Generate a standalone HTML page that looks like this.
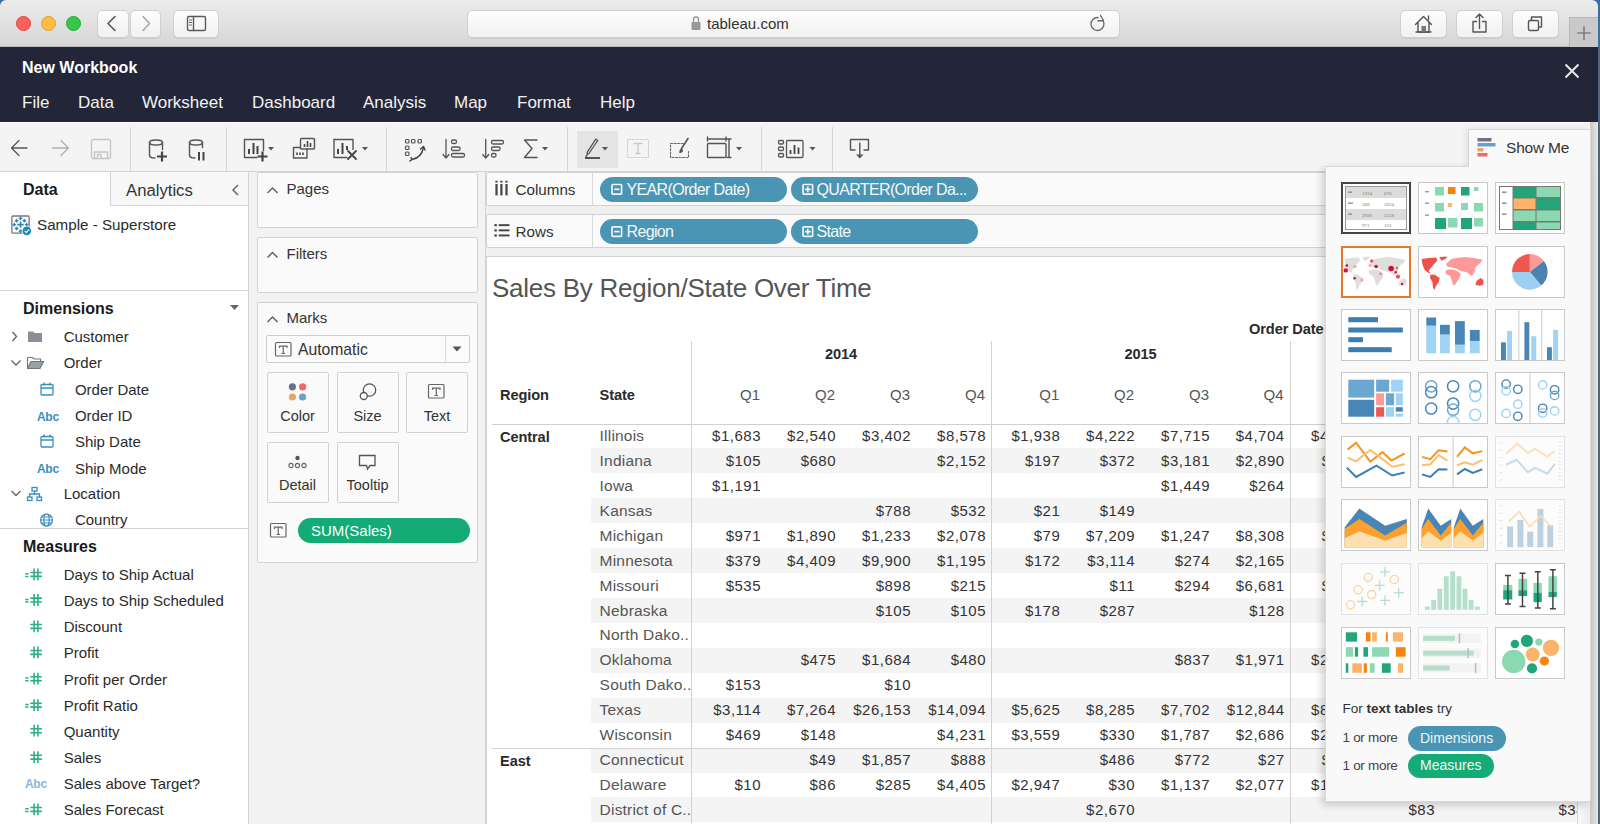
<!DOCTYPE html>
<html><head><meta charset="utf-8">
<style>
*{box-sizing:border-box;margin:0;padding:0}
html,body{width:1600px;height:824px;overflow:hidden;background:#3a6ea5}
body{position:relative;font-family:"Liberation Sans",sans-serif;color:#333}
.a{position:absolute}
.t{position:absolute;white-space:nowrap;line-height:1}
/* browser chrome */
#chrome{left:0;top:0;width:1598px;height:47px;background:linear-gradient(#ececec,#d6d6d6);border-top-left-radius:6px;border-top-right-radius:6px;border-bottom:1px solid #b8b8b8}
.light{width:15px;height:15px;border-radius:50%;top:16px}
.btn{background:linear-gradient(#fdfdfd,#f1f1f1);border:1px solid #cfcfcf;border-radius:5px;box-shadow:0 1px 0 rgba(0,0,0,.06)}
#hdr{left:0;top:47px;width:1598px;height:75px;background:#232638}
#hdr .m{color:#f2f2f2;font-size:17px;top:46.5px}
#tb{left:0;top:122px;width:1598px;height:50px;background:#f4f4f4;border-bottom:1px solid #d4d4d4;border-top:1px solid #fdfdfd}
.sep{width:1px;background:#d6d6d6;top:4px;height:44px}
#main{left:0;top:172px;width:1598px;height:652px;background:#f0f0f0}
.box{background:#fafafa;border:1px solid #d2d2d2;border-radius:2px}
.mk{width:62px;height:61px;border:1px solid #d2d2d2;background:#fafafa;border-radius:2px}
.mkt{width:62px;text-align:center;font-size:14.5px;color:#333}
.pill{border-radius:13px}
.bp{height:24.5px;background:#4a95b3;border-radius:12.5px}
.bpt{font-size:16px;color:#f4f8fa;letter-spacing:-0.65px}
.hd{font-size:14.6px;font-weight:bold;color:#2a2a2a;letter-spacing:-0.1px;margin-top:1.5px}
.qh{width:60px;text-align:right;font-size:15px;color:#555}
.st{font-size:15.5px;color:#555;letter-spacing:0.2px}
.nv{width:80px;text-align:right;font-size:15px;color:#333;letter-spacing:0.5px;margin-left:1px}
</style></head><body>
<div id="chrome" class="a">
  <div class="a light" style="left:16px;background:#fc605c;border:1px solid #e0443e"></div>
  <div class="a light" style="left:41px;background:#fdbc40;border:1px solid #dea034"></div>
  <div class="a light" style="left:66px;background:#34c84a;border:1px solid #27aa35"></div>
  <div class="a btn" style="left:97px;top:10px;width:32px;height:28px"></div>
  <div class="a btn" style="left:130px;top:10px;width:31px;height:28px"></div>
  <div class="a btn" style="left:173px;top:10px;width:46px;height:28px"></div>
  <div class="a btn" style="left:467px;top:10px;width:653px;height:28px"></div>
  <div class="t" style="left:707px;top:16px;font-size:15px;color:#333">tableau.com</div>
  <div class="a btn" style="left:1400px;top:10px;width:47px;height:28px"></div>
  <div class="a btn" style="left:1456px;top:10px;width:47px;height:28px"></div>
  <div class="a btn" style="left:1512px;top:10px;width:47px;height:28px"></div>
  <div class="a" style="left:1569px;top:17px;width:29px;height:30px;background:#c9c9c9;border-left:1px solid #b9b9b9;border-top:1px solid #b9b9b9"></div>
  <svg class="a" style="left:0;top:0" width="1598" height="47" fill="none" stroke-linecap="round" stroke-linejoin="round">
    <path d="M115 16.5l-7 7 7 7" stroke="#555" stroke-width="1.6"/>
    <path d="M143 16.5l6.5 7-6.5 7" stroke="#a8a8a8" stroke-width="1.6"/>
    <rect x="187.5" y="16.5" width="18" height="14" rx="1.5" stroke="#5a5a5a" stroke-width="1.4"/>
    <path d="M193.5 16.5v14" stroke="#5a5a5a" stroke-width="1.4"/>
    <path d="M189.5 20h2M189.5 22.5h2M189.5 25h2" stroke="#5a5a5a" stroke-width="1"/>
    <rect x="691.5" y="22" width="9" height="8" rx="1" fill="#9a9a9a"/>
    <path d="M693.5 22v-2.5a2.5 2.5 0 0 1 5 0V22" stroke="#9a9a9a" stroke-width="1.5"/>
    <path d="M1098 17.5a6.5 6.5 0 1 0 5 3" stroke="#666" stroke-width="1.3"/>
    <path d="M1100.5 15.5l3 5-5.5 .5" stroke="#666" stroke-width="1.3"/>
    <!-- home -->
    <path d="M1415.5 24.5l8-8 8 8M1418 22.5v9.5h11v-9.5M1428.5 19.5v-3.5" stroke="#555" stroke-width="1.4"/>
    <path d="M1416 32h15" stroke="#555" stroke-width="1.4"/>
    <rect x="1421.5" y="26" width="4.5" height="6" fill="#777"/>
    <!-- share -->
    <path d="M1476.5 21.5h-3.5v10.5h13v-10.5h-3.5M1479.5 28.5v-14.5M1476 17.5l3.5-3.5 3.5 3.5" stroke="#555" stroke-width="1.4"/>
    <!-- tabs -->
    <rect x="1528.5" y="20.5" width="10" height="10" rx="1.5" stroke="#555" stroke-width="1.4"/>
    <path d="M1531.5 20.5v-3.5h10v10h-3" stroke="#555" stroke-width="1.4"/>
    <path d="M1584 26.5v13M1577.5 33h13" stroke="#666" stroke-width="1.2"/>
  </svg>
</div>
<div id="hdr" class="a">
  <div class="t" style="left:22px;top:13px;font-size:16px;font-weight:bold;color:#fff">New Workbook</div>
  <div class="t m" style="left:22px">File</div>
  <div class="t m" style="left:78px">Data</div>
  <div class="t m" style="left:142px">Worksheet</div>
  <div class="t m" style="left:252px">Dashboard</div>
  <div class="t m" style="left:363px">Analysis</div>
  <div class="t m" style="left:454px">Map</div>
  <div class="t m" style="left:517px">Format</div>
  <div class="t m" style="left:600px">Help</div>
  <svg class="a" style="left:1564px;top:16px" width="16" height="16"><path d="M1.5 1.5l13 13M14.5 1.5l-13 13" stroke="#e8e8e8" stroke-width="2"/></svg>
</div>
<div id="tb" class="a">
  <div class="a" style="left:576.5px;top:7.5px;width:41px;height:37px;background:#e4e4e4"></div>
  <div class="a sep" style="left:130px"></div>
  <div class="a sep" style="left:226px"></div>
  <div class="a sep" style="left:386px"></div>
  <div class="a sep" style="left:567px"></div>
  <div class="a sep" style="left:761px"></div>
  <div class="a sep" style="left:832px"></div>
  <svg class="a" style="left:0;top:-122px" width="900" height="172" fill="none" stroke-linecap="round" stroke-linejoin="round">
    <g stroke="#555" stroke-width="1.3"><path d="M11.5 147H27M11.5 147l7.5-7.5M11.5 147l7.5 7.5"/></g>
    <g stroke="#b0b0b0" stroke-width="1.3"><path d="M52.5 147H68.5M68.5 147l-7.5-7.5M68.5 147l-7.5 7.5"/></g>
    <g stroke="#c4c4c4" stroke-width="1.3"><rect x="91.5" y="138.5" width="19" height="19" rx="1.5"/><path d="M94.5 157.5v-6.5h13v6.5M97.5 157.5v-4h3.5v4"/></g>
    <!-- datasource + -->
    <g stroke="#555" stroke-width="1.4">
      <ellipse cx="156" cy="141.5" rx="6.5" ry="2.5"/>
      <path d="M149.5 141.5v13c0 1.5 2.5 2.5 5.5 2.5M162.5 141.5v7"/>
      <path d="M183 0"/>
    </g>
    <g stroke="#444" stroke-width="2.2" stroke-linecap="butt"><path d="M162 150.5v10M157 155.5h10"/></g>
    <!-- datasource pause -->
    <g stroke="#555" stroke-width="1.4">
      <ellipse cx="196" cy="141.5" rx="6.5" ry="2.5"/>
      <path d="M189.5 141.5v13c0 1.5 2.5 2.5 5.5 2.5M202.5 141.5v5"/>
    </g>
    <g stroke="#444" stroke-width="2" stroke-linecap="butt"><path d="M199 151v8.5M203.5 151v8.5"/></g>
    <!-- new worksheet -->
    <g stroke="#555" stroke-width="1.4">
      <path d="M257 156.5h-12.5v-18h19v11"/>
    </g>
    <g stroke="#444" stroke-width="2" stroke-linecap="butt"><path d="M249 148v5M253.5 142v11M257.5 145v8"/><path d="M262.5 150.5v10M257.5 155.5h10" stroke-width="2.2"/></g>
    <path d="M268 146h6l-3 3.5z" fill="#555"/>
    <!-- duplicate -->
    <g stroke="#555" stroke-width="1.4">
      <rect x="300.5" y="137.5" width="14" height="10.5" rx="1"/>
      <path d="M300 146.5h-6.5v10.5h13.5v-9"/>
    </g>
    <g stroke="#444" stroke-width="1.6" stroke-linecap="butt"><path d="M304.5 143v3M307.5 140v6M310.5 142v4M297 151.5v2.5M300 151.5v2.5M303 151.5v2.5"/></g>
    <!-- clear sheet -->
    <g stroke="#555" stroke-width="1.4"><path d="M347 156.5h-13v-18h19v10"/></g>
    <g stroke="#444" stroke-width="2" stroke-linecap="butt"><path d="M338 148v5M342.5 142v11M347 145v4"/></g>
    <g stroke="#444" stroke-width="1.8"><path d="M348 150l8 8M356 150l-8 8"/></g>
    <path d="M362 146h6l-3 3.5z" fill="#555"/>
    <!-- swap -->
    <g stroke="#555" stroke-width="1.2">
      <rect x="405.5" y="138.5" width="3.5" height="3.5" rx="1"/><rect x="411.5" y="138.5" width="3.5" height="3.5" rx="1"/><rect x="418" y="138.5" width="3.5" height="3.5" rx="1"/>
      <rect x="405.5" y="145" width="3.5" height="3.5" rx="1"/><rect x="405.5" y="151" width="3.5" height="3.5" rx="1"/>
    </g>
    <g stroke="#444" stroke-width="1.5"><path d="M412 158.5c6 -1 10 -5 11.5 -12"/><path d="M420.5 148l3-2.5 1.5 3.5M411 156.5l1 2-2 1.5"/></g>
    <!-- sort asc -->
    <g stroke="#555" stroke-width="1.3">
      <path d="M446 138.5v18M443 153.5l3 3.5 3-3.5"/>
      <rect x="451.5" y="139" width="5" height="3.5" rx="1.5"/><rect x="451.5" y="146" width="8.5" height="3.5" rx="1.5"/><rect x="451.5" y="152.5" width="13" height="3.5" rx="1.5"/>
    </g>
    <!-- sort desc -->
    <g stroke="#555" stroke-width="1.3">
      <path d="M485.7 138.5v18M482.7 153.5l3 3.5 3-3.5"/>
      <rect x="491.5" y="139.5" width="12" height="3.5" rx="1.5"/><rect x="491.5" y="146" width="8.5" height="3.5" rx="1.5"/><rect x="491.5" y="152.5" width="4.5" height="3.5" rx="1.5"/>
    </g>
    <!-- sigma -->
    <g stroke="#555" stroke-width="1.4" stroke-linecap="butt"><path d="M537.5 139H524.5l7.5 8.5-7.5 9h13"/></g>
    <path d="M542 146h6l-3 3.5z" fill="#555"/>
    <!-- pen -->
    <g stroke="#555" stroke-width="1.3"><path d="M589 152.5l-2 1 .3-2.3 8.5-13 2 1.3z"/><path d="M586 155.5l1-1"/></g>
    <path d="M585 156h15v2h-15z" fill="#555"/>
    <path d="M602 146h6l-3 3.5z" fill="#555"/>
    <!-- T dotted -->
    <g stroke="#cfcfcf" stroke-width="1.1" stroke-dasharray="2 1.5"><rect x="627.5" y="138.5" width="21" height="18" rx="1"/></g>
    <g stroke="#c8c8c8" stroke-width="1.3"><path d="M634 142.5h8M638 142.5v10M636 152.5h4"/></g>
    <!-- dotted + brush -->
    <g stroke="#666" stroke-width="1.1" stroke-dasharray="2 1.5"><path d="M683 142.5h-12.5v14h18v-6"/></g>
    <g stroke="#555" stroke-width="1.6"><path d="M688 137.5l-6.5 10"/></g>
    <path d="M680 148.5c1 -1 3 -1 3 1s-2 2.5 -4 2.5c1 -1 0 -2.5 1 -3.5z" fill="#555"/>
    <!-- fit -->
    <g stroke="#555" stroke-width="1.4">
      <rect x="707.5" y="142.5" width="18.5" height="14" rx="1"/>
      <path d="M707.5 138h18M707.5 136v4M726 136v4M729 138v18.5M727 138h4M727 156.5h4"/>
    </g>
    <path d="M736 146h6l-3 3.5z" fill="#555"/>
    <!-- presentation -->
    <g stroke="#555" stroke-width="1.3">
      <rect x="778.5" y="139.5" width="5" height="3.5" rx="1.2"/><rect x="778.5" y="146" width="5" height="3.5" rx="1.2"/><rect x="778.5" y="152.5" width="5" height="3.5" rx="1.2"/>
      <rect x="786.5" y="139.5" width="16.5" height="17" rx="1"/>
    </g>
    <g stroke="#444" stroke-width="1.8" stroke-linecap="butt"><path d="M790.5 149v4M794.5 144v9M798.5 146.5v6.5"/></g>
    <path d="M809.5 146h6l-3 3.5z" fill="#555"/>
    <!-- download -->
    <g stroke="#555" stroke-width="1.4"><path d="M855 149h-4.5v-10.5h18v10.5h-4.5M859.8 142v13"/></g>
    <path d="M856 153.5h7.6l-3.8 4z" fill="#555"/>
  </svg>
</div>
<div id="main" class="a">
  <!-- left data pane: page coords minus top 172 -->
  <div class="a" style="left:0;top:0;width:249px;height:652px;background:#fff;border-right:1px solid #d4d4d4"></div>
  <div class="a" style="left:110px;top:0;width:138px;height:34px;background:#f7f7f7;border-left:1px solid #d4d4d4;border-bottom:1px solid #d4d4d4"></div>
  <div class="t" style="left:23px;top:10px;font-size:16px;font-weight:bold;color:#1a1a1a">Data</div>
  <div class="t" style="left:126px;top:10.5px;font-size:16.7px;color:#333">Analytics</div>
  <svg class="a" style="left:228px;top:10px" width="14" height="16"><path d="M10 3l-5 5 5 5" fill="none" stroke="#666" stroke-width="1.5"/></svg>
  <div class="t" style="left:37px;top:45px;font-size:15.2px;color:#2b2b2b">Sample - Superstore</div>
  <svg class="a" style="left:10px;top:42px" width="26" height="24">
    <rect x="1.9" y="2" width="17.2" height="17.2" rx="1" fill="#fff" stroke="#777" stroke-width="1.3"/>
    <path d="M8.7 4.4h3.6M10.5 2.6000000000000005v3.6" stroke="#2f86b8" stroke-width="1.4"/><path d="M4.8 6.8h3.6M6.6 5.0v3.6" stroke="#2f86b8" stroke-width="1.4"/><path d="M12.6 6.8h3.6M14.4 5.0v3.6" stroke="#2f86b8" stroke-width="1.4"/><path d="M2.5 10.6h3.6M4.3 8.799999999999999v3.6" stroke="#2f86b8" stroke-width="1.4"/><path d="M14.899999999999999 10.6h3.6M16.7 8.799999999999999v3.6" stroke="#2f86b8" stroke-width="1.4"/><path d="M4.8 14.5h3.6M6.6 12.7v3.6" stroke="#2f86b8" stroke-width="1.4"/><path d="M8.7 17h3.6M10.5 15.2v3.6" stroke="#2f86b8" stroke-width="1.4"/><path d="M7.3 10.6h6.4M10.5 7.3999999999999995v6.4" stroke="#2f86b8" stroke-width="1.6"/>
    <circle cx="16.8" cy="16.9" r="5" fill="#fff"/><circle cx="16.8" cy="16.9" r="4.3" fill="#1f87b5"/><path d="M14.6 16.9l1.6 1.7 2.9-3.1" fill="none" stroke="#dfeff7" stroke-width="1.2"/>
  </svg>


  <!-- columns / rows shelves -->
  <div class="a box" style="left:486px;top:0;width:1104px;height:34px"></div>
  <div class="a box" style="left:486px;top:42px;width:1104px;height:34px"></div>
  <div class="a" style="left:592px;top:1px;width:1px;height:32px;background:#dadada"></div>
  <div class="a" style="left:592px;top:43px;width:1px;height:32px;background:#dadada"></div>
  <div class="t" style="left:515.5px;top:10px;font-size:15.2px;color:#333">Columns</div>
  <div class="t" style="left:515.5px;top:52px;font-size:15.2px;color:#333">Rows</div>
  <svg class="a" style="left:486px;top:0" width="40" height="80">
    <g fill="#444"><rect x="9.4" y="8.8" width="2.2" height="1.8"/><rect x="14.3" y="8.8" width="2.2" height="1.8"/><rect x="19.4" y="8.8" width="2.2" height="1.8"/>
    <rect x="9.4" y="12" width="2.2" height="11.4"/><rect x="14.3" y="12" width="2.2" height="11.4"/><rect x="19.4" y="12" width="2.2" height="11.4"/>
    <rect x="8.4" y="52" width="2.4" height="2.2"/><rect x="8.4" y="57.3" width="2.4" height="2.2"/><rect x="8.4" y="62.4" width="2.4" height="2.2"/>
    <rect x="12.7" y="52.2" width="10.8" height="1.9"/><rect x="12.7" y="57.4" width="10.8" height="1.9"/><rect x="12.7" y="62.5" width="10.8" height="1.9"/></g>
  </svg>
  <div class="a pill bp" style="left:600px;top:5px;width:187px"></div>
  <div class="a pill bp" style="left:791px;top:5px;width:186.5px"></div>
  <div class="a pill bp" style="left:600px;top:47.3px;width:187px"></div>
  <div class="a pill bp" style="left:791px;top:47.3px;width:186.5px"></div>
  <div class="t bpt" style="left:626.5px;top:9.5px">YEAR(Order Date)</div>
  <div class="t bpt" style="left:816.5px;top:9.5px">QUARTER(Order Da...</div>
  <div class="t bpt" style="left:626.5px;top:51.8px">Region</div>
  <div class="t bpt" style="left:816.5px;top:51.8px">State</div>
  <svg class="a" style="left:600px;top:0" width="400" height="80" fill="none" stroke="#eef5f8" stroke-width="1.7">
    <rect x="12" y="12.5" width="9.6" height="9.6" rx="0.8"/><path d="M14.1 17.3h5.4"/>
    <rect x="203" y="12.5" width="9.6" height="9.6" rx="0.8"/><path d="M204.9 17.3h5.8M207.8 14.4v5.8"/>
    <rect x="12" y="54.8" width="9.6" height="9.6" rx="0.8"/><path d="M14.1 59.6h5.4"/>
    <rect x="203" y="54.8" width="9.6" height="9.6" rx="0.8"/><path d="M204.9 59.6h5.8M207.8 56.7v5.8"/>
  </svg>
  <!-- view -->
  <div class="a" style="left:486px;top:84px;width:1104px;height:600px;background:#fff;border:1px solid #d2d2d2"></div>
<div class="a" style="left:0;top:-172px;width:1598px;height:824px;pointer-events:none">
<div class="a" style="left:487px;top:257px;width:1090px;height:567px;overflow:hidden;background:#fff">
<div class="t" style="left:5px;top:17.5px;font-size:26px;color:#555;letter-spacing:-0.25px">Sales By Region/State Over Time</div>
<div class="a" style="left:104px;top:191.4px;width:1600px;height:24.93px;background:#f4f4f4"></div>
<div class="a" style="left:104px;top:241.3px;width:1600px;height:24.93px;background:#f4f4f4"></div>
<div class="a" style="left:104px;top:291.2px;width:1600px;height:24.93px;background:#f4f4f4"></div>
<div class="a" style="left:104px;top:341.0px;width:1600px;height:24.93px;background:#f4f4f4"></div>
<div class="a" style="left:104px;top:390.9px;width:1600px;height:24.93px;background:#f4f4f4"></div>
<div class="a" style="left:104px;top:440.7px;width:1600px;height:24.93px;background:#f4f4f4"></div>
<div class="a" style="left:104px;top:490.6px;width:1600px;height:24.93px;background:#f4f4f4"></div>
<div class="a" style="left:104px;top:540.4px;width:1600px;height:24.93px;background:#f4f4f4"></div>
<div class="a" style="left:5px;top:166.5px;width:1200px;height:1.5px;background:#d0d0d0"></div>
<div class="a" style="left:5px;top:490.5px;width:1200px;height:1px;background:#d2d2d2"></div>
<div class="a" style="left:204px;top:83.5px;width:1px;height:600px;background:#d2d2d2"></div>
<div class="a" style="left:503.5px;top:83.5px;width:1px;height:600px;background:#d2d2d2"></div>
<div class="a" style="left:803px;top:83.5px;width:1px;height:600px;background:#d2d2d2"></div>
<div class="t hd" style="left:13px;top:129.5px">Region</div>
<div class="t hd" style="left:112.60000000000002px;top:129.5px">State</div>
<div class="t hd" style="left:762px;top:63.0px">Order Date</div>
<div class="t hd" style="left:254.0px;width:200px;text-align:center;top:88.0px">2014</div>
<div class="t hd" style="left:553.5px;width:200px;text-align:center;top:88.0px">2015</div>
<div class="t hd" style="left:853.0px;width:200px;text-align:center;top:88.0px">2016</div>
<div class="t qh" style="left:213px;top:129.5px">Q1</div>
<div class="t qh" style="left:288px;top:129.5px">Q2</div>
<div class="t qh" style="left:363px;top:129.5px">Q3</div>
<div class="t qh" style="left:438px;top:129.5px">Q4</div>
<div class="t qh" style="left:512.3px;top:129.5px">Q1</div>
<div class="t qh" style="left:587px;top:129.5px">Q2</div>
<div class="t qh" style="left:662px;top:129.5px">Q3</div>
<div class="t qh" style="left:736.5999999999999px;top:129.5px">Q4</div>
<div class="t qh" style="left:812px;top:129.5px">Q1</div>
<div class="t qh" style="left:887px;top:129.5px">Q2</div>
<div class="t qh" style="left:962px;top:129.5px">Q3</div>
<div class="t qh" style="left:1037px;top:129.5px">Q4</div>
<div class="t hd" style="left:13px;top:171.0px">Central</div>
<div class="t st" style="left:112.60000000000002px;top:171.0px">Illinois</div>
<div class="t nv" style="left:193px;top:171.0px">$1,683</div>
<div class="t nv" style="left:268px;top:171.0px">$2,540</div>
<div class="t nv" style="left:343px;top:171.0px">$3,402</div>
<div class="t nv" style="left:418px;top:171.0px">$8,578</div>
<div class="t nv" style="left:492.29999999999995px;top:171.0px">$1,938</div>
<div class="t nv" style="left:567px;top:171.0px">$4,222</div>
<div class="t nv" style="left:642px;top:171.0px">$7,715</div>
<div class="t nv" style="left:716.5999999999999px;top:171.0px">$4,704</div>
<div class="t nv" style="left:792px;top:171.0px">$4,012</div>
<div class="t st" style="left:112.60000000000002px;top:195.9px">Indiana</div>
<div class="t nv" style="left:193px;top:195.9px">$105</div>
<div class="t nv" style="left:268px;top:195.9px">$680</div>
<div class="t nv" style="left:418px;top:195.9px">$2,152</div>
<div class="t nv" style="left:492.29999999999995px;top:195.9px">$197</div>
<div class="t nv" style="left:567px;top:195.9px">$372</div>
<div class="t nv" style="left:642px;top:195.9px">$3,181</div>
<div class="t nv" style="left:716.5999999999999px;top:195.9px">$2,890</div>
<div class="t nv" style="left:789px;top:195.9px">$836</div>
<div class="t st" style="left:112.60000000000002px;top:220.9px">Iowa</div>
<div class="t nv" style="left:193px;top:220.9px">$1,191</div>
<div class="t nv" style="left:642px;top:220.9px">$1,449</div>
<div class="t nv" style="left:716.5999999999999px;top:220.9px">$264</div>
<div class="t st" style="left:112.60000000000002px;top:245.8px">Kansas</div>
<div class="t nv" style="left:343px;top:245.8px">$788</div>
<div class="t nv" style="left:418px;top:245.8px">$532</div>
<div class="t nv" style="left:492.29999999999995px;top:245.8px">$21</div>
<div class="t nv" style="left:567px;top:245.8px">$149</div>
<div class="t st" style="left:112.60000000000002px;top:270.7px">Michigan</div>
<div class="t nv" style="left:193px;top:270.7px">$971</div>
<div class="t nv" style="left:268px;top:270.7px">$1,890</div>
<div class="t nv" style="left:343px;top:270.7px">$1,233</div>
<div class="t nv" style="left:418px;top:270.7px">$2,078</div>
<div class="t nv" style="left:492.29999999999995px;top:270.7px">$79</div>
<div class="t nv" style="left:567px;top:270.7px">$7,209</div>
<div class="t nv" style="left:642px;top:270.7px">$1,247</div>
<div class="t nv" style="left:716.5999999999999px;top:270.7px">$8,308</div>
<div class="t nv" style="left:789px;top:270.7px">$912</div>
<div class="t st" style="left:112.60000000000002px;top:295.6px">Minnesota</div>
<div class="t nv" style="left:193px;top:295.6px">$379</div>
<div class="t nv" style="left:268px;top:295.6px">$4,409</div>
<div class="t nv" style="left:343px;top:295.6px">$9,900</div>
<div class="t nv" style="left:418px;top:295.6px">$1,195</div>
<div class="t nv" style="left:492.29999999999995px;top:295.6px">$172</div>
<div class="t nv" style="left:567px;top:295.6px">$3,114</div>
<div class="t nv" style="left:642px;top:295.6px">$274</div>
<div class="t nv" style="left:716.5999999999999px;top:295.6px">$2,165</div>
<div class="t st" style="left:112.60000000000002px;top:320.6px">Missouri</div>
<div class="t nv" style="left:193px;top:320.6px">$535</div>
<div class="t nv" style="left:343px;top:320.6px">$898</div>
<div class="t nv" style="left:418px;top:320.6px">$215</div>
<div class="t nv" style="left:567px;top:320.6px">$11</div>
<div class="t nv" style="left:642px;top:320.6px">$294</div>
<div class="t nv" style="left:716.5999999999999px;top:320.6px">$6,681</div>
<div class="t nv" style="left:789px;top:320.6px">$604</div>
<div class="t st" style="left:112.60000000000002px;top:345.5px">Nebraska</div>
<div class="t nv" style="left:343px;top:345.5px">$105</div>
<div class="t nv" style="left:418px;top:345.5px">$105</div>
<div class="t nv" style="left:492.29999999999995px;top:345.5px">$178</div>
<div class="t nv" style="left:567px;top:345.5px">$287</div>
<div class="t nv" style="left:716.5999999999999px;top:345.5px">$128</div>
<div class="t st" style="left:112.60000000000002px;top:370.4px">North Dako..</div>
<div class="t st" style="left:112.60000000000002px;top:395.4px">Oklahoma</div>
<div class="t nv" style="left:268px;top:395.4px">$475</div>
<div class="t nv" style="left:343px;top:395.4px">$1,684</div>
<div class="t nv" style="left:418px;top:395.4px">$480</div>
<div class="t nv" style="left:642px;top:395.4px">$837</div>
<div class="t nv" style="left:716.5999999999999px;top:395.4px">$1,971</div>
<div class="t nv" style="left:792px;top:395.4px">$2,310</div>
<div class="t st" style="left:112.60000000000002px;top:420.3px">South Dako..</div>
<div class="t nv" style="left:193px;top:420.3px">$153</div>
<div class="t nv" style="left:343px;top:420.3px">$10</div>
<div class="t st" style="left:112.60000000000002px;top:445.2px">Texas</div>
<div class="t nv" style="left:193px;top:445.2px">$3,114</div>
<div class="t nv" style="left:268px;top:445.2px">$7,264</div>
<div class="t nv" style="left:343px;top:445.2px">$26,153</div>
<div class="t nv" style="left:418px;top:445.2px">$14,094</div>
<div class="t nv" style="left:492.29999999999995px;top:445.2px">$5,625</div>
<div class="t nv" style="left:567px;top:445.2px">$8,285</div>
<div class="t nv" style="left:642px;top:445.2px">$7,702</div>
<div class="t nv" style="left:716.5999999999999px;top:445.2px">$12,844</div>
<div class="t nv" style="left:792px;top:445.2px">$8,541</div>
<div class="t st" style="left:112.60000000000002px;top:470.2px">Wisconsin</div>
<div class="t nv" style="left:193px;top:470.2px">$469</div>
<div class="t nv" style="left:268px;top:470.2px">$148</div>
<div class="t nv" style="left:418px;top:470.2px">$4,231</div>
<div class="t nv" style="left:492.29999999999995px;top:470.2px">$3,559</div>
<div class="t nv" style="left:567px;top:470.2px">$330</div>
<div class="t nv" style="left:642px;top:470.2px">$1,787</div>
<div class="t nv" style="left:716.5999999999999px;top:470.2px">$2,686</div>
<div class="t nv" style="left:792px;top:470.2px">$2,905</div>
<div class="t hd" style="left:13px;top:495.1px">East</div>
<div class="t st" style="left:112.60000000000002px;top:495.1px">Connecticut</div>
<div class="t nv" style="left:268px;top:495.1px">$49</div>
<div class="t nv" style="left:343px;top:495.1px">$1,857</div>
<div class="t nv" style="left:418px;top:495.1px">$888</div>
<div class="t nv" style="left:567px;top:495.1px">$486</div>
<div class="t nv" style="left:642px;top:495.1px">$772</div>
<div class="t nv" style="left:716.5999999999999px;top:495.1px">$27</div>
<div class="t nv" style="left:789px;top:495.1px">$753</div>
<div class="t st" style="left:112.60000000000002px;top:520.0px">Delaware</div>
<div class="t nv" style="left:193px;top:520.0px">$10</div>
<div class="t nv" style="left:268px;top:520.0px">$86</div>
<div class="t nv" style="left:343px;top:520.0px">$285</div>
<div class="t nv" style="left:418px;top:520.0px">$4,405</div>
<div class="t nv" style="left:492.29999999999995px;top:520.0px">$2,947</div>
<div class="t nv" style="left:567px;top:520.0px">$30</div>
<div class="t nv" style="left:642px;top:520.0px">$1,137</div>
<div class="t nv" style="left:716.5999999999999px;top:520.0px">$2,077</div>
<div class="t nv" style="left:792px;top:520.0px">$1,045</div>
<div class="t st" style="left:112.60000000000002px;top:545.0px">District of C..</div>
<div class="t nv" style="left:567px;top:545.0px">$2,670</div>
<div class="t nv" style="left:867px;top:545.0px">$83</div>
<div class="t nv" style="left:1017px;top:545.0px">$34</div>
</div>
<div class="a" style="left:1577px;top:800px;width:1px;height:24px;background:#d2d2d2"></div>
<div class="a" style="left:1585px;top:800px;width:1px;height:24px;background:#d2d2d2"></div>
</div>
  <!-- shelves column -->
  <div class="a" style="left:249px;top:0;width:237px;height:652px;background:#f2f2f2;border-right:1px solid #d4d4d4"></div>
  <div class="a box" style="left:257px;top:0;width:221px;height:56px"></div>
  <div class="a box" style="left:257px;top:65px;width:221px;height:56px"></div>
  <div class="a box" style="left:257px;top:130px;width:221px;height:261px"></div>
  <div class="t" style="left:286.5px;top:9.2px;font-size:15px;color:#333">Pages</div>
  <div class="t" style="left:286.5px;top:73.7px;font-size:15px;color:#333">Filters</div>
  <div class="t" style="left:286.5px;top:138.2px;font-size:15px;color:#333">Marks</div>
  <div class="a" style="left:265.5px;top:163px;width:204px;height:28px;background:#fbfbfb;border:1px solid #cdcdcd;border-radius:2px"></div>
  <div class="a" style="left:445px;top:164px;width:1px;height:26px;background:#dcdcdc"></div>
  <div class="t" style="left:298px;top:170px;font-size:15.7px;color:#333">Automatic</div>
  <div class="a mk" style="left:266.5px;top:199.5px"></div>
  <div class="a mk" style="left:336.5px;top:199.5px"></div>
  <div class="a mk" style="left:406px;top:199.5px"></div>
  <div class="a mk" style="left:266.5px;top:269.5px"></div>
  <div class="a mk" style="left:336.5px;top:269.5px"></div>
  <div class="t mkt" style="left:266.5px;top:237px">Color</div>
  <div class="t mkt" style="left:336.5px;top:237px">Size</div>
  <div class="t mkt" style="left:406px;top:237px">Text</div>
  <div class="t mkt" style="left:266.5px;top:306px">Detail</div>
  <div class="t mkt" style="left:336.5px;top:306px">Tooltip</div>
  <div class="a pill" style="left:297.5px;top:346px;width:172px;height:24.5px;background:#14ab76"></div>
  <div class="t" style="left:311px;top:351px;font-size:15px;color:#fff">SUM(Sales)</div>
  <svg class="a" style="left:0;top:-172px" width="486" height="600" fill="none">
    <path d="M267.5 193l5-5 5 5M267.5 257.5l5-5 5 5M267.5 322l5-5 5 5" stroke="#666" stroke-width="1.5"/>
    <path d="M452.5 346.5h9l-4.5 5z" fill="#555"/>
    <g stroke="#666" stroke-width="1.2"><rect x="275.5" y="342.5" width="15.5" height="13.5" rx="1"/></g>
    <g stroke="#666" stroke-width="1.2"><rect x="428.5" y="384.5" width="15.5" height="13.5" rx="1"/></g>
    <g stroke="#666" stroke-width="1.2"><rect x="270.5" y="523.5" width="15.5" height="13.5" rx="1"/></g><path d="M279.5 348.0v-1.8h7.5v1.8M283.25 346.2v7.3M281.5 353.5h3.5" stroke="#666" stroke-width="1.2"/><path d="M432.5 390.0v-1.8h7.5v1.8M436.25 388.2v7.3M434.5 395.5h3.5" stroke="#666" stroke-width="1.2"/><path d="M274.5 529.0v-1.8h7.5v1.8M278.25 527.2v7.3M276.5 534.5h3.5" stroke="#666" stroke-width="1.2"/>
    <circle cx="292.4" cy="386.8" r="3.6" fill="#6c6f8a"/><circle cx="302.6" cy="386.8" r="3.6" fill="#f0666a"/>
    <circle cx="292.4" cy="397" r="3.6" fill="#eda26a"/><circle cx="302.6" cy="397" r="3.6" fill="#6a9fd0"/>
    <g stroke="#555" stroke-width="1.3"><circle cx="369.5" cy="390" r="6.2"/><circle cx="363.8" cy="396" r="3.5" fill="#fafafa"/></g>
    <circle cx="297.5" cy="458" r="2.2" fill="#555"/>
    <g stroke="#666" stroke-width="1.1"><circle cx="291" cy="465.5" r="2.1"/><circle cx="297.5" cy="465.5" r="2.1"/><circle cx="304" cy="465.5" r="2.1"/></g>
    <path d="M359.5 455.5h15.5v10h-5l-2.5 3.5-1-3.5h-7z" stroke="#555" stroke-width="1.3"/>
  </svg>
  <div class="a" style="left:0;top:118px;width:248px;height:1px;background:#d4d4d4"></div>
  <div class="t" style="left:23px;top:128.8px;font-size:16px;font-weight:bold;color:#1a1a1a">Dimensions</div>
  <svg class="a" style="left:229px;top:132px" width="12" height="8"><path d="M1 1h9l-4.5 5z" fill="#666"/></svg>
  <div class="a" style="left:0;top:356px;width:248px;height:1px;background:#d4d4d4"></div>
  <div class="t" style="left:23px;top:367px;font-size:16px;font-weight:bold;color:#1a1a1a">Measures</div>
  <svg class="a" style="left:0;top:-172px" width="248" height="824" fill="none">
  <path d="M12.5 332l4 4.5-4 4.5" stroke="#666" stroke-width="1.4"/>
  <path d="M11.5 360.5l4.5 4.5 4.5-4.5" stroke="#666" stroke-width="1.4"/>
  <path d="M11.5 491l4.5 4.5 4.5-4.5" stroke="#666" stroke-width="1.4"/><path d="M34.1 568.5v11.8M37.9 568.5v11.8M30.3 572.5h11.6M30.3 576.4h11.6" stroke="#2eb086" stroke-width="1.6"/><path d="M25.2 573.8h3.3M25.2 576.4h3.3" stroke="#2eb086" stroke-width="1.5"/><path d="M34.1 594.1v11.8M37.9 594.1v11.8M30.3 598.1h11.6M30.3 602.0h11.6" stroke="#2eb086" stroke-width="1.6"/><path d="M25.2 599.4h3.3M25.2 602.0h3.3" stroke="#2eb086" stroke-width="1.5"/><path d="M34.1 620.5v11.8M37.9 620.5v11.8M30.3 624.5h11.6M30.3 628.4h11.6" stroke="#2eb086" stroke-width="1.6"/><path d="M34.1 646.5v11.8M37.9 646.5v11.8M30.3 650.5h11.6M30.3 654.4h11.6" stroke="#2eb086" stroke-width="1.6"/><path d="M34.1 672.8v11.8M37.9 672.8v11.8M30.3 676.8h11.6M30.3 680.7h11.6" stroke="#2eb086" stroke-width="1.6"/><path d="M25.2 678.1h3.3M25.2 680.7h3.3" stroke="#2eb086" stroke-width="1.5"/><path d="M34.1 699.2v11.8M37.9 699.2v11.8M30.3 703.2h11.6M30.3 707.1h11.6" stroke="#2eb086" stroke-width="1.6"/><path d="M25.2 704.5h3.3M25.2 707.1h3.3" stroke="#2eb086" stroke-width="1.5"/><path d="M34.1 724.8v11.8M37.9 724.8v11.8M30.3 728.8h11.6M30.3 732.7h11.6" stroke="#2eb086" stroke-width="1.6"/><path d="M34.1 751.2v11.8M37.9 751.2v11.8M30.3 755.2h11.6M30.3 759.1h11.6" stroke="#2eb086" stroke-width="1.6"/><path d="M34.1 803.5v11.8M37.9 803.5v11.8M30.3 807.5h11.6M30.3 811.4h11.6" stroke="#2eb086" stroke-width="1.6"/><path d="M25.2 808.8h3.3M25.2 811.4h3.3" stroke="#2eb086" stroke-width="1.5"/>
  <path d="M28 331.5h5l1.5 1.5h7.5v9h-14z" fill="#8a8f99"/>
  <path d="M27.5 357.5h5l1.5 1.5h6.5v2.5" stroke="#777" stroke-width="1.2"/><path d="M27.5 357.5v11h12.5l3.5-7h-12.5l-3.5 7" stroke="#777" stroke-width="1.2" fill="#9aa0a8"/>
  <rect x="41" y="384.5" width="12" height="10.5" rx="1" stroke="#3a8fbf" stroke-width="1.3"/><path d="M41 388.0h12M44 382.5v3M50 382.5v3" stroke="#3a8fbf" stroke-width="1.3"/>
  <rect x="41" y="436.5" width="12" height="10.5" rx="1" stroke="#3a8fbf" stroke-width="1.3"/><path d="M41 440.0h12M44 434.5v3M50 434.5v3" stroke="#3a8fbf" stroke-width="1.3"/>
  <g stroke="#3a8fbf" stroke-width="1.3"><rect x="32" y="487.5" width="5" height="3.5"/><path d="M34.5 491v3M29.5 497v-3h10v3"/><rect x="27.5" y="497" width="4.5" height="3.5"/><rect x="37" y="497" width="4.5" height="3.5"/></g>
  <g stroke="#3a8fbf" stroke-width="1.2"><circle cx="46.5" cy="520" r="6"/><ellipse cx="46.5" cy="520" rx="2.7" ry="6"/><path d="M40.5 520h12M41.5 517h10M41.5 523h10"/></g>
  
  
  
  
  
  
  
  
  
  
  
  
  
  
  </svg>
  <div class="t" style="left:63.7px;top:157.4px;font-size:15px;color:#2b2b2b">Customer</div>
  <div class="t" style="left:63.7px;top:183.4px;font-size:15px;color:#2b2b2b">Order</div>
  <div class="t" style="left:74.9px;top:210.0px;font-size:15px;color:#2b2b2b">Order Date</div>
  <div class="t" style="left:74.9px;top:236.4px;font-size:15px;color:#2b2b2b">Order ID</div>
  <div class="t" style="left:74.9px;top:262.2px;font-size:15px;color:#2b2b2b">Ship Date</div>
  <div class="t" style="left:74.9px;top:288.8px;font-size:15px;color:#2b2b2b">Ship Mode</div>
  <div class="t" style="left:63.7px;top:314.4px;font-size:15px;color:#2b2b2b">Location</div>
  <div class="t" style="left:74.9px;top:340.4px;font-size:15px;color:#2b2b2b">Country</div>
  <div class="t" style="left:63.7px;top:395.4px;font-size:15px;color:#2b2b2b">Days to Ship Actual</div>
  <div class="t" style="left:63.7px;top:421.0px;font-size:15px;color:#2b2b2b">Days to Ship Scheduled</div>
  <div class="t" style="left:63.7px;top:447.4px;font-size:15px;color:#2b2b2b">Discount</div>
  <div class="t" style="left:63.7px;top:473.4px;font-size:15px;color:#2b2b2b">Profit</div>
  <div class="t" style="left:63.7px;top:499.7px;font-size:15px;color:#2b2b2b">Profit per Order</div>
  <div class="t" style="left:63.7px;top:526.1px;font-size:15px;color:#2b2b2b">Profit Ratio</div>
  <div class="t" style="left:63.7px;top:551.7px;font-size:15px;color:#2b2b2b">Quantity</div>
  <div class="t" style="left:63.7px;top:578.1px;font-size:15px;color:#2b2b2b">Sales</div>
  <div class="t" style="left:63.7px;top:604.3px;font-size:15px;color:#2b2b2b">Sales above Target?</div>
  <div class="t" style="left:63.7px;top:630.4px;font-size:15px;color:#2b2b2b">Sales Forecast</div>
  <div class="t" style="left:37px;top:238.5px;font-size:12px;font-weight:bold;color:#3a8fbf;letter-spacing:-0.3px">Abc</div>
  <div class="t" style="left:37px;top:290.9px;font-size:12px;font-weight:bold;color:#3a8fbf;letter-spacing:-0.3px">Abc</div>
  <div class="t" style="left:25px;top:606.4px;font-size:12px;font-weight:bold;color:#8bb8d8;letter-spacing:-0.3px">Abc</div>
</div>
<div class="a" style="left:1577px;top:800px;width:13px;height:24px;background:linear-gradient(90deg,#fafafa,#ececec)"></div>
<div class="a" style="left:1577px;top:800px;width:1px;height:24px;background:#d6d6d6"></div>
<div class="a" style="left:1590px;top:122px;width:8px;height:702px;background:linear-gradient(90deg,#c9c9c9,#e6e6e6)"></div>
<div class="a" style="left:1598px;top:47px;width:1px;height:777px;background:#50607a"></div>
<!-- show me -->
<div class="a" style="left:1467.5px;top:129px;width:123px;height:40px;background:#f9f9f9;border:1px solid #d8d8d8;border-bottom:none;box-shadow:-2px 0 6px rgba(0,0,0,.08)"></div>
<div class="a" style="left:1324.5px;top:166px;width:266px;height:636px;background:#f9f9f9;border:1px solid #d8d8d8;box-shadow:-3px 3px 8px rgba(0,0,0,.18)"></div>
<div class="a" style="left:1468.5px;top:160px;width:121px;height:10px;background:#f9f9f9"></div>
<svg class="a" style="left:1477px;top:137px" width="20" height="22">
  <rect x="0.5" y="1" width="14" height="3.5" fill="#6e7289"/>
  <rect x="0.5" y="6" width="18" height="3.5" fill="#6a9fcd"/>
  <rect x="0.5" y="11" width="6" height="3.5" fill="#f0a35e"/>
  <rect x="0.5" y="16" width="10" height="3.5" fill="#f06a6a"/>
</svg>
<div class="t" style="left:1506px;top:139.5px;font-size:15.5px;color:#333;letter-spacing:-0.2px">Show Me</div>
<svg class="a" style="left:1341px;top:182px" width="70" height="52"><rect width="70" height="52" fill="#fff"/><rect x="4.5" y="4.5" width="61" height="43" fill="#fff" stroke="#999" stroke-width="1"/><rect x="5" y="5" width="60" height="11" fill="#dcdcdc"/><rect x="5" y="27" width="60" height="11" fill="#dcdcdc"/><rect x="7" y="9.5" width="4" height="1.3" fill="#888"/><text x="21" y="12.8" font-size="5" fill="#777" font-family="Liberation Serif">1234</text><text x="43" y="12.8" font-size="5" fill="#777" font-family="Liberation Serif">676</text><rect x="7" y="20.5" width="5" height="1.3" fill="#888"/><text x="21" y="23.8" font-size="5" fill="#777" font-family="Liberation Serif">368</text><text x="43" y="23.8" font-size="5" fill="#777" font-family="Liberation Serif">3034</text><rect x="7" y="31.5" width="4" height="1.3" fill="#888"/><text x="21" y="34.8" font-size="5" fill="#777" font-family="Liberation Serif">2920</text><text x="43" y="34.8" font-size="5" fill="#777" font-family="Liberation Serif">2558</text><text x="21" y="45.3" font-size="5" fill="#777" font-family="Liberation Serif">971</text><text x="43" y="45.3" font-size="5" fill="#777" font-family="Liberation Serif">322</text><rect x="1" y="1" width="68" height="50" fill="none" stroke="#444" stroke-width="2"/></svg>
<svg class="a" style="left:1418px;top:182px" width="70" height="52"><rect width="70" height="52" fill="#fff"/><rect x="7" y="9" width="4" height="1.4" fill="#999"/><rect x="7" y="20.5" width="4" height="1.4" fill="#999"/><rect x="7" y="32.5" width="4" height="1.4" fill="#999"/><rect x="17" y="5" width="9" height="8.5" fill="#8ad9b0"/><rect x="30" y="5" width="7.5" height="7" fill="#f7840c"/><rect x="43" y="5" width="8.5" height="8.5" fill="#23a57a"/><rect x="56" y="5" width="4.5" height="4" fill="#8ad9b0"/><rect x="17" y="21" width="9" height="8.5" fill="#8ad9b0"/><rect x="30" y="21" width="4" height="4" fill="#fdb46a"/><rect x="43" y="21" width="7" height="7" fill="#8ad9b0"/><rect x="56" y="21" width="9" height="8.5" fill="#8ad9b0"/><rect x="17" y="36" width="11" height="11" fill="#23a57a"/><rect x="30" y="36" width="9.5" height="9.5" fill="#8ad9b0"/><rect x="43" y="36" width="11" height="11" fill="#23a57a"/><rect x="56" y="36" width="9" height="8.5" fill="#8ad9b0"/><rect x="0.5" y="0.5" width="69" height="51" fill="none" stroke="#c9c9c9" stroke-width="1"/></svg>
<svg class="a" style="left:1495px;top:182px" width="70" height="52"><rect width="70" height="52" fill="#fff"/><rect x="4" y="4" width="62" height="44" fill="#777"/><rect x="5" y="5" width="12.5" height="42" fill="#fff"/><rect x="7" y="9.5" width="4.5" height="1.4" fill="#888"/><rect x="7" y="20.5" width="4.5" height="1.4" fill="#888"/><rect x="7" y="31.5" width="4.5" height="1.4" fill="#888"/><rect x="18.5" y="5" width="22" height="10" fill="#23a57a"/><rect x="41.5" y="5" width="23.5" height="10" fill="#8ad9b0"/><rect x="18.5" y="16.5" width="22" height="10.5" fill="#fdb46a"/><rect x="41.5" y="16.5" width="23.5" height="10.5" fill="#23a57a"/><rect x="18.5" y="28.5" width="22" height="10.5" fill="#8ad9b0"/><rect x="41.5" y="28.5" width="23.5" height="10.5" fill="#8ad9b0"/><rect x="18.5" y="40.5" width="22" height="6.5" fill="#23a57a"/><rect x="41.5" y="40.5" width="23.5" height="6.5" fill="#8ad9b0"/><rect x="0.5" y="0.5" width="69" height="51" fill="none" stroke="#c9c9c9" stroke-width="1"/></svg>
<svg class="a" style="left:1341px;top:245.5px" width="70" height="52"><rect width="70" height="52" fill="#fff"/><polygon points="3.7,13.0 10.7,12.0 18.0,11.4 19.4,14.0 17.4,16.7 15.4,18.7 14.0,20.7 12.0,22.7 10.7,25.4 13.0,27.4 10.0,26.7 6.7,24.0 5.0,20.0 4.0,16.0" fill="#dedede"/><polygon points="21.4,11.0 29.4,10.4 27.4,13.0 23.4,14.7" fill="#dedede"/><polygon points="12.4,28.7 16.4,28.4 21.7,32.0 20.7,36.0 18.0,40.0 16.4,44.0 15.0,41.4 14.4,36.0 12.0,32.0" fill="#dedede"/><polygon points="28.0,18.0 33.4,13.0 38.7,12.0 46.7,11.0 55.4,12.0 64.7,13.7 62.7,16.7 60.0,18.7 57.4,21.4 56.7,25.4 55.4,28.0 53.4,30.0 50.7,27.4 48.0,26.0 45.4,25.4 42.0,24.7 38.7,22.7 33.4,21.4 29.4,20.7" fill="#dedede"/><polygon points="27.4,24.7 30.7,23.4 36.0,23.4 40.0,25.4 42.7,28.0 41.4,32.0 38.7,36.0 36.7,39.4 35.0,38.7 33.4,33.4 32.0,30.0 28.0,28.0" fill="#dedede"/><polygon points="57.4,38.7 58.7,34.7 62.7,32.0 65.4,34.0 65.4,38.7 62.0,39.7" fill="#dedede"/><circle cx="5.8" cy="19.6" r="1.4" fill="#d0103a"/><circle cx="4.8" cy="24.4" r="2.2" fill="#d0103a"/><circle cx="13.9" cy="20.5" r="1.6" fill="#f9a0a0"/><circle cx="30.7" cy="14.9" r="1.7" fill="#ef5050"/><circle cx="28.8" cy="19.6" r="1.3" fill="#f9a0a0"/><circle cx="35.1" cy="20.5" r="1.8" fill="#d0103a"/><circle cx="39.5" cy="27.8" r="1.3" fill="#f48080"/><circle cx="50.1" cy="22.5" r="2.8" fill="#d0103a"/><circle cx="56" cy="22" r="1.2" fill="#ef5050"/><circle cx="54.8" cy="26.3" r="1.2" fill="#d0103a"/><circle cx="57" cy="30.7" r="2.1" fill="#ef5050"/><circle cx="13.6" cy="32.2" r="1.3" fill="#d0103a"/><circle cx="20.9" cy="33.9" r="1.6" fill="#f9a0a0"/><circle cx="61" cy="38" r="1.2" fill="#d0103a"/><rect x="1" y="1" width="68" height="50" fill="none" stroke="#e8792b" stroke-width="2"/></svg>
<svg class="a" style="left:1418px;top:245.5px" width="70" height="52"><rect width="70" height="52" fill="#fff"/><polygon points="3.7,13.0 10.7,12.0 18.0,11.4 19.4,14.0 17.4,16.7 15.4,18.7 14.0,20.7 12.0,22.7 10.7,25.4 13.0,27.4 10.0,26.7 6.7,24.0 5.0,20.0 4.0,16.0" fill="#f0504a"/><polygon points="21.4,11.0 29.4,10.4 27.4,13.0 23.4,14.7" fill="#f0504a"/><polygon points="12.4,28.7 16.4,28.4 21.7,32.0 20.7,36.0 18.0,40.0 16.4,44.0 15.0,41.4 14.4,36.0 12.0,32.0" fill="#f0504a"/><polygon points="28.0,18.0 33.4,13.0 38.7,12.0 46.7,11.0 55.4,12.0 64.7,13.7 62.7,16.7 60.0,18.7 57.4,21.4 56.7,25.4 55.4,28.0 53.4,30.0 50.7,27.4 48.0,26.0 45.4,25.4 42.0,24.7 38.7,22.7 33.4,21.4 29.4,20.7" fill="#fc9a9a"/><polygon points="27.4,24.7 30.7,23.4 36.0,23.4 40.0,25.4 42.7,28.0 41.4,32.0 38.7,36.0 36.7,39.4 35.0,38.7 33.4,33.4 32.0,30.0 28.0,28.0" fill="#fc9a9a"/><polygon points="57.4,38.7 58.7,34.7 62.7,32.0 65.4,34.0 65.4,38.7 62.0,39.7" fill="#f0504a"/><rect x="0.5" y="0.5" width="69" height="51" fill="none" stroke="#c9c9c9" stroke-width="1"/></svg>
<svg class="a" style="left:1495px;top:245.5px" width="70" height="52"><rect width="70" height="52" fill="#fff"/><path d="M34.8 25.9L34.80 8.10A17.8 17.8 0 0 1 48.83 14.94Z" fill="#fc9a9a"/><path d="M34.8 25.9L48.83 14.94A17.8 17.8 0 0 1 46.24 39.54Z" fill="#4a83b0"/><path d="M34.8 25.9L46.24 39.54A17.8 17.8 0 0 1 17.00 25.90Z" fill="#9dcff0"/><path d="M34.8 25.9L17.00 25.90A17.8 17.8 0 0 1 34.80 8.10Z" fill="#f0584f"/><rect x="0.5" y="0.5" width="69" height="51" fill="none" stroke="#c9c9c9" stroke-width="1"/></svg>
<svg class="a" style="left:1341px;top:309px" width="70" height="52"><rect width="70" height="52" fill="#fff"/><rect x="7.3" y="8.2" width="29.7" height="5" fill="#3d7eb0"/><rect x="7.3" y="18.5" width="54.5" height="5" fill="#3d7eb0"/><rect x="7.3" y="28.2" width="14.7" height="5" fill="#3d7eb0"/><rect x="7.3" y="38.2" width="43.4" height="5" fill="#3d7eb0"/><rect x="0.5" y="0.5" width="69" height="51" fill="none" stroke="#c9c9c9" stroke-width="1"/></svg>
<svg class="a" style="left:1418px;top:309px" width="70" height="52"><rect width="70" height="52" fill="#fff"/><rect x="8.3" y="8.5" width="9.8" height="8.3" fill="#4a86b5"/><rect x="8.3" y="16.8" width="9.8" height="27.499999999999996" fill="#9fd3f3"/><rect x="22" y="15.8" width="9.8" height="9.899999999999999" fill="#4a86b5"/><rect x="22" y="25.7" width="9.8" height="18.599999999999998" fill="#9fd3f3"/><rect x="37" y="12.1" width="9.8" height="23.699999999999996" fill="#4a86b5"/><rect x="37" y="35.8" width="9.8" height="8.5" fill="#9fd3f3"/><rect x="51.9" y="20.9" width="9.8" height="11.300000000000004" fill="#4a86b5"/><rect x="51.9" y="32.2" width="9.8" height="12.099999999999994" fill="#9fd3f3"/><rect x="0.5" y="0.5" width="69" height="51" fill="none" stroke="#c9c9c9" stroke-width="1"/></svg>
<svg class="a" style="left:1495px;top:309px" width="70" height="52"><rect width="70" height="52" fill="#fff"/><path d="M23.8 0v52M46.8 0v52" stroke="#ccc" stroke-width="1"/><rect x="6" y="33.3" width="4.9" height="17.700000000000003" fill="#4a86b5"/><rect x="12.1" y="21.9" width="4.9" height="29.1" fill="#9fd3f3"/><rect x="29.4" y="13.2" width="4.9" height="37.8" fill="#4a86b5"/><rect x="36.3" y="27.2" width="4.9" height="23.8" fill="#9fd3f3"/><rect x="52" y="38.2" width="4.9" height="12.799999999999997" fill="#4a86b5"/><rect x="58.2" y="20.9" width="4.9" height="30.1" fill="#9fd3f3"/><rect x="0.5" y="0.5" width="69" height="51" fill="none" stroke="#c9c9c9" stroke-width="1"/></svg>
<svg class="a" style="left:1341px;top:372px" width="70" height="52"><rect width="70" height="52" fill="#fff"/><rect x="7.3" y="7.7" width="25.9" height="17.9" fill="#6aa8d2"/><rect x="7.3" y="27.8" width="25.9" height="16.9" fill="#4a86b5"/><rect x="35.1" y="7.7" width="13.1" height="12.0" fill="#6aa8d2"/><rect x="50.1" y="7.7" width="11.7" height="12.0" fill="#9fd3f3"/><rect x="35.1" y="21.3" width="8.0" height="12.0" fill="#fc9a9a"/><rect x="44.9" y="21.3" width="8.2" height="12.0" fill="#6aa8d2"/><rect x="54.8" y="21.3" width="7.0" height="12.0" fill="#9fd3f3"/><rect x="35.1" y="35.2" width="8.0" height="9.5" fill="#f0574f"/><rect x="44.9" y="35.2" width="8.2" height="9.5" fill="#9fd3f3"/><rect x="54.8" y="35.2" width="7.0" height="4.5" fill="#4a86b5"/><rect x="54.8" y="41.5" width="7.0" height="3.2" fill="#9fd3f3"/><rect x="0.5" y="0.5" width="69" height="51" fill="none" stroke="#c9c9c9" stroke-width="1"/></svg>
<svg class="a" style="left:1418px;top:372px" width="70" height="52"><rect width="70" height="52" fill="#fff"/><clipPath id="cc"><rect x="0" y="0" width="70" height="51"/></clipPath><g clip-path="url(#cc)"><circle cx="13.2" cy="14.3" r="5.6" fill="none" stroke="#6aa8d2" stroke-width="1.5"/><circle cx="13.2" cy="20.2" r="5.6" fill="none" stroke="#4a86b5" stroke-width="1.5"/><circle cx="13.2" cy="36.5" r="5.6" fill="none" stroke="#4a86b5" stroke-width="1.5"/><circle cx="35.1" cy="14.3" r="5.6" fill="none" stroke="#4a86b5" stroke-width="1.5"/><circle cx="35.1" cy="31.6" r="5.6" fill="none" stroke="#4a86b5" stroke-width="1.5"/><circle cx="35.1" cy="37.7" r="5.6" fill="none" stroke="#6aa8d2" stroke-width="1.5"/><circle cx="35.1" cy="50" r="5.6" fill="none" stroke="#9fd3f3" stroke-width="1.5"/><circle cx="57.3" cy="14.3" r="5.6" fill="none" stroke="#6aa8d2" stroke-width="1.5"/><circle cx="57.3" cy="23.8" r="5.6" fill="none" stroke="#9fd3f3" stroke-width="1.5"/><circle cx="57.3" cy="42.8" r="5.6" fill="none" stroke="#9fd3f3" stroke-width="1.5"/></g><rect x="0.5" y="0.5" width="69" height="51" fill="none" stroke="#c9c9c9" stroke-width="1"/></svg>
<svg class="a" style="left:1495px;top:372px" width="70" height="52"><rect width="70" height="52" fill="#fff"/><path d="M35.1 0v52" stroke="#ccc" stroke-width="1"/><circle cx="11.1" cy="12.1" r="4.2" fill="none" stroke="#4a86b5" stroke-width="1.4"/><circle cx="11.1" cy="18.7" r="4.2" fill="none" stroke="#9fd3f3" stroke-width="1.4"/><circle cx="22.8" cy="17.3" r="4.2" fill="none" stroke="#4a86b5" stroke-width="1.4"/><circle cx="22.8" cy="32.2" r="4.2" fill="none" stroke="#9fd3f3" stroke-width="1.4"/><circle cx="11.1" cy="41.4" r="4.2" fill="none" stroke="#9fd3f3" stroke-width="1.4"/><circle cx="22.8" cy="44.3" r="4.2" fill="none" stroke="#4a86b5" stroke-width="1.4"/><circle cx="47.7" cy="12.9" r="4.2" fill="none" stroke="#9fd3f3" stroke-width="1.4"/><circle cx="59.6" cy="17.8" r="4.2" fill="none" stroke="#4a86b5" stroke-width="1.4"/><circle cx="59.6" cy="23.4" r="4.2" fill="none" stroke="#6aa8d2" stroke-width="1.4"/><circle cx="47.7" cy="36.3" r="4.2" fill="none" stroke="#4a86b5" stroke-width="1.4"/><circle cx="47.7" cy="41" r="4.2" fill="none" stroke="#9fd3f3" stroke-width="1.4"/><circle cx="59.6" cy="38.9" r="4.2" fill="none" stroke="#9fd3f3" stroke-width="1.4"/><rect x="0.5" y="0.5" width="69" height="51" fill="none" stroke="#c9c9c9" stroke-width="1"/></svg>
<svg class="a" style="left:1341px;top:436px" width="70" height="52"><rect width="70" height="52" fill="#fff"/><polyline points="6.6,13.6 15.1,6.7 29.2,25.7 41.4,16.1 50.4,24.6 63.6,17.5" fill="none" stroke="#f7941e" stroke-width="2" stroke-linejoin="miter"/><polyline points="6.6,21.6 15.1,25.3 29.2,14 41.4,23.1 51.2,30.7 63.6,28.2" fill="none" stroke="#fdbf6f" stroke-width="2" stroke-linejoin="miter"/><polyline points="5.8,31.6 15.1,40.9 35.5,29.7 51.2,39.5 63.6,36.5" fill="none" stroke="#3d7eb0" stroke-width="2" stroke-linejoin="miter"/><rect x="0.5" y="0.5" width="69" height="51" fill="none" stroke="#c9c9c9" stroke-width="1"/></svg>
<svg class="a" style="left:1418px;top:436px" width="70" height="52"><rect width="70" height="52" fill="#fff"/><path d="M35.1 0v52" stroke="#ccc" stroke-width="1"/><polyline points="4,20.9 12.3,23.1 20.6,14.3 29.4,15.5" fill="none" stroke="#f7941e" stroke-width="2" stroke-linejoin="miter"/><polyline points="4,29.2 12.3,28.2 20.6,19 29.4,24.6" fill="none" stroke="#fdbf6f" stroke-width="2" stroke-linejoin="miter"/><polyline points="4,38.4 12.3,40.9 20.6,33.3 29.4,33.6" fill="none" stroke="#3d7eb0" stroke-width="2" stroke-linejoin="miter"/><polyline points="39,20.9 46.8,11.4 54.8,17.3 64.3,15.1" fill="none" stroke="#f7941e" stroke-width="2" stroke-linejoin="miter"/><polyline points="39,29.2 46.8,26.3 54.8,28.7 64.3,23.8" fill="none" stroke="#fdbf6f" stroke-width="2" stroke-linejoin="miter"/><polyline points="39,38.4 46.8,33 54.8,37 64.3,33.3" fill="none" stroke="#3d7eb0" stroke-width="2" stroke-linejoin="miter"/><rect x="0.5" y="0.5" width="69" height="51" fill="none" stroke="#c9c9c9" stroke-width="1"/></svg>
<svg class="a" style="left:1495px;top:436px" width="70" height="52"><rect width="70" height="52" fill="#fcfcfc"/><rect x="4.5" y="6.4" width="3" height="0.8" fill="#ddd"/><rect x="4.5" y="13.9" width="3" height="0.8" fill="#ddd"/><rect x="4.5" y="21.3" width="3" height="0.8" fill="#ddd"/><rect x="4.5" y="28.8" width="3" height="0.8" fill="#ddd"/><rect x="4.5" y="36.3" width="3" height="0.8" fill="#ddd"/><rect x="4.5" y="43.7" width="3" height="0.8" fill="#ddd"/><rect x="63.5" y="6.0" width="3" height="0.8" fill="#ddd"/><rect x="63.5" y="9.8" width="3" height="0.8" fill="#ddd"/><rect x="63.5" y="13.5" width="3" height="0.8" fill="#ddd"/><rect x="63.5" y="17.2" width="3" height="0.8" fill="#ddd"/><rect x="63.5" y="21.0" width="3" height="0.8" fill="#ddd"/><rect x="63.5" y="24.8" width="3" height="0.8" fill="#ddd"/><rect x="63.5" y="28.5" width="3" height="0.8" fill="#ddd"/><rect x="63.5" y="32.2" width="3" height="0.8" fill="#ddd"/><rect x="63.5" y="36.0" width="3" height="0.8" fill="#ddd"/><rect x="63.5" y="39.8" width="3" height="0.8" fill="#ddd"/><rect x="63.5" y="43.5" width="3" height="0.8" fill="#ddd"/><polyline points="11.1,17.5 22.4,7.7 33,17 40,12.6 52.2,20.5 59.8,15.1" fill="none" stroke="#fde0bb" stroke-width="2" stroke-linejoin="miter"/><polyline points="11.1,28.7 21.6,23.8 33,36.3 40,31.9 52.3,37.7 59.8,28.2" fill="none" stroke="#c9dae8" stroke-width="2" stroke-linejoin="miter"/><rect x="0.5" y="0.5" width="69" height="51" fill="none" stroke="#e2e2e2" stroke-width="1"/></svg>
<svg class="a" style="left:1341px;top:499px" width="70" height="52"><rect width="70" height="52" fill="#fff"/><polygon points="3.7,28.2 18.3,9.6 44.2,26.7 65.8,19.9 65.8,48.2 3.7,48.2" fill="#4a86b5"/><polygon points="3.7,29.7 18.3,19.9 44.2,36.6 65.8,23.8 65.8,48.2 3.7,48.2" fill="#fca12f"/><polygon points="3.7,39.2 18.3,32.6 44.2,41.4 65.8,34.1 65.8,48.2 3.7,48.2" fill="#fde0b0"/><rect x="0.5" y="0.5" width="69" height="51" fill="none" stroke="#c9c9c9" stroke-width="1"/></svg>
<svg class="a" style="left:1418px;top:499px" width="70" height="52"><rect width="70" height="52" fill="#fff"/><polygon points="3.7,28.2 10.2,9.6 22.7,26.7 33.2,19.9 33.2,48.2 3.7,48.2" fill="#4a86b5"/><polygon points="3.7,29.7 10.2,19.9 22.7,36.6 33.2,23.8 33.2,48.2 3.7,48.2" fill="#fca12f"/><polygon points="3.7,39.2 10.2,32.6 22.7,41.4 33.2,34.1 33.2,48.2 3.7,48.2" fill="#fde0b0"/><polygon points="35.800000000000004,28.2 42.3,9.6 54.8,26.7 65.30000000000001,19.9 65.30000000000001,48.2 35.800000000000004,48.2" fill="#4a86b5"/><polygon points="35.800000000000004,29.7 42.3,19.9 54.8,36.6 65.30000000000001,23.8 65.30000000000001,48.2 35.800000000000004,48.2" fill="#fca12f"/><polygon points="35.800000000000004,39.2 42.3,32.6 54.8,41.4 65.30000000000001,34.1 65.30000000000001,48.2 35.800000000000004,48.2" fill="#fde0b0"/><rect x="0.5" y="0.5" width="69" height="51" fill="none" stroke="#c9c9c9" stroke-width="1"/></svg>
<svg class="a" style="left:1495px;top:499px" width="70" height="52"><rect width="70" height="52" fill="#fcfcfc"/><rect x="4.5" y="6.4" width="3" height="0.8" fill="#ddd"/><rect x="4.5" y="13.9" width="3" height="0.8" fill="#ddd"/><rect x="4.5" y="21.3" width="3" height="0.8" fill="#ddd"/><rect x="4.5" y="28.8" width="3" height="0.8" fill="#ddd"/><rect x="4.5" y="36.3" width="3" height="0.8" fill="#ddd"/><rect x="4.5" y="43.7" width="3" height="0.8" fill="#ddd"/><rect x="63.5" y="6.0" width="3" height="0.8" fill="#ddd"/><rect x="63.5" y="9.8" width="3" height="0.8" fill="#ddd"/><rect x="63.5" y="13.5" width="3" height="0.8" fill="#ddd"/><rect x="63.5" y="17.2" width="3" height="0.8" fill="#ddd"/><rect x="63.5" y="21.0" width="3" height="0.8" fill="#ddd"/><rect x="63.5" y="24.8" width="3" height="0.8" fill="#ddd"/><rect x="63.5" y="28.5" width="3" height="0.8" fill="#ddd"/><rect x="63.5" y="32.2" width="3" height="0.8" fill="#ddd"/><rect x="63.5" y="36.0" width="3" height="0.8" fill="#ddd"/><rect x="63.5" y="39.8" width="3" height="0.8" fill="#ddd"/><rect x="63.5" y="43.5" width="3" height="0.8" fill="#ddd"/><rect x="12.1" y="27.5" width="6" height="20.7" fill="#bcd2e3"/><rect x="22.4" y="20.9" width="6" height="27.3" fill="#bcd2e3"/><rect x="32.2" y="32.6" width="6" height="15.6" fill="#bcd2e3"/><rect x="42.4" y="9.9" width="6" height="38.3" fill="#bcd2e3"/><rect x="52.3" y="26.3" width="6" height="21.9" fill="#bcd2e3"/><polyline points="13.6,22.8 24.3,12.6 34.5,27.8 45.8,17 56.4,27.8" fill="none" stroke="#fcdcb0" stroke-width="1.6" stroke-linejoin="miter"/><rect x="0.5" y="0.5" width="69" height="51" fill="none" stroke="#e2e2e2" stroke-width="1"/></svg>
<svg class="a" style="left:1341px;top:563px" width="70" height="52"><rect width="70" height="52" fill="#fcfcfc"/><circle cx="27.3" cy="14.3" r="4.1" fill="none" stroke="#fdd3a6" stroke-width="1.3"/><circle cx="53.4" cy="16.5" r="4.1" fill="none" stroke="#fdd3a6" stroke-width="1.3"/><circle cx="17.1" cy="26.8" r="4.1" fill="none" stroke="#fdd3a6" stroke-width="1.3"/><circle cx="30.7" cy="31.6" r="4.1" fill="none" stroke="#fdd3a6" stroke-width="1.3"/><circle cx="9.5" cy="41.8" r="4.1" fill="none" stroke="#fdd3a6" stroke-width="1.3"/><path d="M38.9 8.8h10M43.9 3.8000000000000007v10" stroke="#b9ddca" stroke-width="1.3"/><path d="M33.7 22.4h10M38.7 17.4v10" stroke="#b9ddca" stroke-width="1.3"/><path d="M52.7 29.7h10M57.7 24.7v10" stroke="#b9ddca" stroke-width="1.3"/><path d="M16.2 38.5h10M21.2 33.5v10" stroke="#b9ddca" stroke-width="1.3"/><path d="M38.9 37.4h10M43.9 32.4v10" stroke="#b9ddca" stroke-width="1.3"/><rect x="0.5" y="0.5" width="69" height="51" fill="none" stroke="#e2e2e2" stroke-width="1"/></svg>
<svg class="a" style="left:1418px;top:563px" width="70" height="52"><rect width="70" height="52" fill="#fcfcfc"/><rect x="6.9" y="43.6" width="4.8" height="3.2" fill="#b5dfcb"/><rect x="13.2" y="37" width="4.8" height="9.8" fill="#b5dfcb"/><rect x="19.4" y="25.7" width="4.8" height="21.1" fill="#b5dfcb"/><rect x="25.9" y="13.2" width="4.8" height="33.6" fill="#b5dfcb"/><rect x="32.2" y="8.2" width="4.8" height="38.6" fill="#b5dfcb"/><rect x="38.5" y="13.2" width="4.8" height="33.6" fill="#b5dfcb"/><rect x="44.6" y="25.7" width="4.8" height="21.1" fill="#b5dfcb"/><rect x="50.7" y="37" width="4.8" height="9.8" fill="#b5dfcb"/><rect x="57" y="43.6" width="4.8" height="3.2" fill="#b5dfcb"/><rect x="0.5" y="0.5" width="69" height="51" fill="none" stroke="#e2e2e2" stroke-width="1"/></svg>
<svg class="a" style="left:1495px;top:563px" width="70" height="52"><rect width="70" height="52" fill="#fff"/><rect x="8.2" y="21.9" width="9.1" height="5.3" fill="#8ad9b0"/><rect x="8.2" y="27.2" width="9.1" height="9.3" fill="#23a57a"/><path d="M12.9 12.6V40.9M9.9 12.6h6M9.9 40.9h6" stroke="#444" stroke-width="1.5"/><rect x="23.4" y="15.8" width="8.8" height="11.4" fill="#8ad9b0"/><rect x="23.4" y="27.2" width="8.8" height="5.8" fill="#23a57a"/><path d="M27.5 10.2V43.6M24.5 10.2h6M24.5 43.6h6" stroke="#444" stroke-width="1.5"/><rect x="38.5" y="19.9" width="8.3" height="9.8" fill="#8ad9b0"/><rect x="38.5" y="29.7" width="8.3" height="9.5" fill="#23a57a"/><path d="M42.8 8.8V45M39.8 8.8h6M39.8 45h6" stroke="#444" stroke-width="1.5"/><rect x="53.5" y="13.2" width="8.3" height="15.5" fill="#8ad9b0"/><rect x="53.5" y="28.7" width="8.3" height="5.4" fill="#23a57a"/><path d="M57.9 6.7V45.8M54.9 6.7h6M54.9 45.8h6" stroke="#444" stroke-width="1.5"/><rect x="0.5" y="0.5" width="69" height="51" fill="none" stroke="#c9c9c9" stroke-width="1"/></svg>
<svg class="a" style="left:1341px;top:626.5px" width="70" height="52"><rect width="70" height="52" fill="#fff"/><rect x="4.8" y="5.3" width="11.3" height="9.3" fill="#23a57a"/><rect x="24.9" y="5.3" width="4.6" height="9.3" fill="#f7840c"/><rect x="31.1" y="5.3" width="4.7" height="9.3" fill="#fdb46a"/><rect x="44.9" y="5.3" width="1.9" height="9.3" fill="#f7840c"/><rect x="51.9" y="5.3" width="10.2" height="9.3" fill="#fdb46a"/><rect x="4.8" y="20.2" width="7.3" height="9.5" fill="#8ad9b0"/><rect x="13.9" y="20.2" width="3.2" height="9.5" fill="#23a57a"/><rect x="22.4" y="20.2" width="4.6" height="9.5" fill="#23a57a"/><rect x="31.1" y="20.2" width="17.1" height="9.5" fill="#8ad9b0"/><rect x="54.8" y="20.2" width="9.8" height="9.5" fill="#f7840c"/><rect x="4.8" y="36.3" width="2.5" height="9.5" fill="#23a57a"/><rect x="11.3" y="36.3" width="9.6" height="9.5" fill="#fdb46a"/><rect x="22.7" y="36.3" width="3.2" height="9.5" fill="#f7840c"/><rect x="28.8" y="36.3" width="4.8" height="9.5" fill="#8ad9b0"/><rect x="40.9" y="36.3" width="8.8" height="9.5" fill="#23a57a"/><rect x="57" y="36.3" width="5.1" height="9.5" fill="#fdb46a"/><rect x="0.5" y="0.5" width="69" height="51" fill="none" stroke="#c9c9c9" stroke-width="1"/></svg>
<svg class="a" style="left:1418px;top:626.5px" width="70" height="52"><rect width="70" height="52" fill="#fcfcfc"/><rect x="5.1" y="6.7" width="58" height="9.4" fill="#f3f3f3"/><rect x="5.1" y="8.9" width="31.9" height="5" fill="#b5dfcb"/><rect x="40.699999999999996" y="6.4" width="1.5" height="10.0" fill="#bbb"/><rect x="5.1" y="21.5" width="58" height="9.4" fill="#f3f3f3"/><rect x="5.1" y="23.7" width="50.5" height="5" fill="#b5dfcb"/><rect x="49.4" y="21.2" width="1.5" height="10.0" fill="#bbb"/><rect x="5.1" y="36.3" width="58" height="9.4" fill="#f3f3f3"/><rect x="5.1" y="38.5" width="26.6" height="5" fill="#b5dfcb"/><rect x="56.8" y="36.0" width="1.5" height="10.0" fill="#bbb"/><rect x="0.5" y="0.5" width="69" height="51" fill="none" stroke="#e2e2e2" stroke-width="1"/></svg>
<svg class="a" style="left:1495px;top:626.5px" width="70" height="52"><rect width="70" height="52" fill="#fff"/><circle cx="18.7" cy="34.5" r="11.7" fill="#8ad9b0"/><circle cx="19.9" cy="17" r="4.3" fill="#23a57a"/><circle cx="31.9" cy="13.9" r="6.1" fill="#23a57a"/><circle cx="43.9" cy="15.1" r="3.7" fill="#8ad9b0"/><circle cx="56" cy="20.9" r="8.2" fill="#fdb46a"/><circle cx="37.7" cy="27.5" r="6.9" fill="#fdb46a"/><circle cx="49.4" cy="34.1" r="4.6" fill="#f7840c"/><circle cx="37" cy="41.4" r="5.1" fill="#23a57a"/><rect x="0.5" y="0.5" width="69" height="51" fill="none" stroke="#c9c9c9" stroke-width="1"/></svg>

<div class="t" style="left:1342.5px;top:702px;font-size:13.5px;color:#333">For <b>text tables</b> try</div>
<div class="t" style="left:1342.5px;top:731px;font-size:13.5px;color:#444;letter-spacing:-0.3px">1 or more</div>
<div class="t" style="left:1342.5px;top:758.5px;font-size:13.5px;color:#444;letter-spacing:-0.3px">1 or more</div>
<div class="a" style="left:1407.5px;top:726px;width:98.5px;height:24.5px;border-radius:12.5px;background:#4a95b3"></div>
<div class="a" style="left:1407.5px;top:753.5px;width:86px;height:24.5px;border-radius:12.5px;background:#14ab76"></div>
<div class="t" style="left:1420px;top:730.5px;font-size:14px;color:#eef6f9">Dimensions</div>
<div class="t" style="left:1420px;top:757.5px;font-size:14px;color:#eef8f3">Measures</div>
</body></html>
